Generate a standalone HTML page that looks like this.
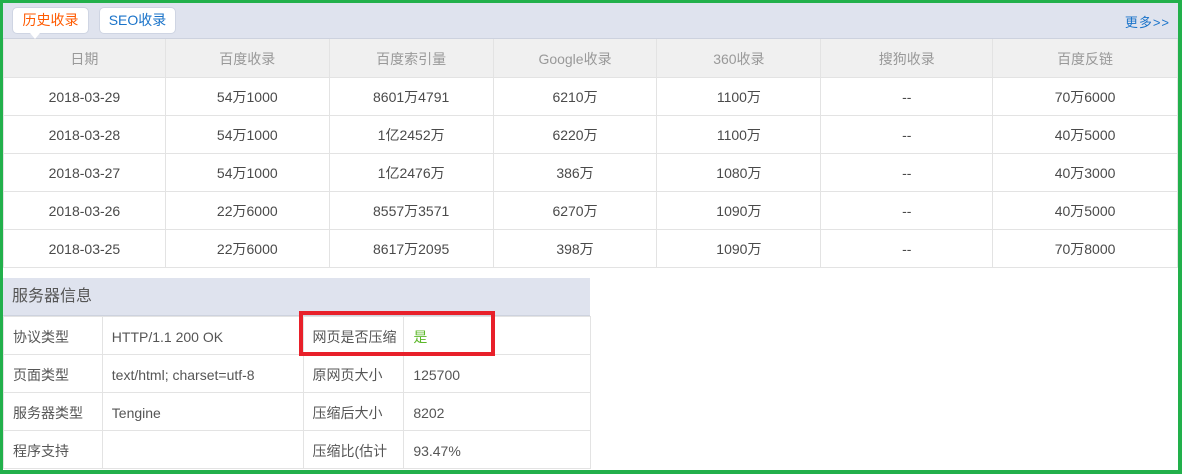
<!DOCTYPE html>
<html><head><meta charset="utf-8"><style>
*{margin:0;padding:0;box-sizing:border-box}
body{width:1182px;height:474px;overflow:hidden;background:#fff;font-family:"Liberation Sans","Noto Sans CJK SC",sans-serif;font-size:14px;color:#555;position:relative}
.frame{position:absolute;left:0;top:0;width:1182px;height:474px;border:3px solid #22b04b;border-width:3px 4px 4px 3px;pointer-events:none;z-index:5}
.bar{position:absolute;left:3px;top:3px;width:1175px;height:36px;background:#dfe3ee;border-bottom:1px solid #cdd2de}
.tab{position:absolute;top:4px;height:27px;border:1px solid #cfd5e3;border-radius:5px;background:#fff;font-size:14px;line-height:25px;text-align:center}
.more{position:absolute;right:8px;top:9px;color:#1a73c9;font-size:13px;letter-spacing:1px}
table{border-collapse:collapse;position:absolute}
td{border:1px solid #e3e3e3;height:38px;text-align:center;color:#4a4a4a;padding-top:2px}
.t1{left:3px;top:39px;width:1175px}
.t1 tr.h td{background:#f0f0f0;color:#999;border-top:none}
.shead{position:absolute;left:3px;top:278px;width:587px;height:38px;background:#dfe3ee;border-bottom:1px solid #cdd2de;font-size:16px;color:#555;line-height:38px;padding-left:9px}
.t2{left:3px;top:316px;width:588px}
.t2 td{text-align:left;padding-left:9px;color:#555}
.red{position:absolute;left:299px;top:311px;width:196px;height:45px;border:4px solid #e8202a;z-index:4}
</style></head><body>
<div class="bar">
<div class="tab" style="left:9px;width:77px;color:#ff5a00">历史收录</div>
<div style="position:absolute;left:27px;top:30px;width:0;height:0;border-left:5px solid transparent;border-right:5px solid transparent;border-top:6px solid #fff"></div>
<div class="tab" style="left:96px;width:77px;color:#1a73c9">SEO收录</div>
<div class="more">更多&gt;&gt;</div>
</div>
<table class="t1">
<colgroup><col style="width:162px"><col style="width:164px"><col style="width:164px"><col style="width:164px"><col style="width:164px"><col style="width:172px"><col style="width:185px"></colgroup>
<tr class="h"><td>日期</td><td>百度收录</td><td>百度索引量</td><td>Google收录</td><td>360收录</td><td>搜狗收录</td><td>百度反链</td></tr>
<tr><td>2018-03-29</td><td>54万1000</td><td>8601万4791</td><td>6210万</td><td>1100万</td><td>--</td><td>70万6000</td></tr>
<tr><td>2018-03-28</td><td>54万1000</td><td>1亿2452万</td><td>6220万</td><td>1100万</td><td>--</td><td>40万5000</td></tr>
<tr><td>2018-03-27</td><td>54万1000</td><td>1亿2476万</td><td>386万</td><td>1080万</td><td>--</td><td>40万3000</td></tr>
<tr><td>2018-03-26</td><td>22万6000</td><td>8557万3571</td><td>6270万</td><td>1090万</td><td>--</td><td>40万5000</td></tr>
<tr><td>2018-03-25</td><td>22万6000</td><td>8617万2095</td><td>398万</td><td>1090万</td><td>--</td><td>70万8000</td></tr>
</table>
<div class="shead">服务器信息</div>
<table class="t2">
<colgroup><col style="width:99px"><col style="width:201px"><col style="width:101px"><col style="width:187px"></colgroup>
<tr><td>协议类型</td><td>HTTP/1.1 200 OK</td><td>网页是否压缩</td><td style="color:#5cb82a">是</td></tr>
<tr><td>页面类型</td><td>text/html; charset=utf-8</td><td>原网页大小</td><td>125700</td></tr>
<tr><td>服务器类型</td><td>Tengine</td><td>压缩后大小</td><td>8202</td></tr>
<tr><td>程序支持</td><td></td><td>压缩比(估计</td><td>93.47%</td></tr>
</table>
<div class="red"></div>
<div class="frame"></div>
</body></html>
